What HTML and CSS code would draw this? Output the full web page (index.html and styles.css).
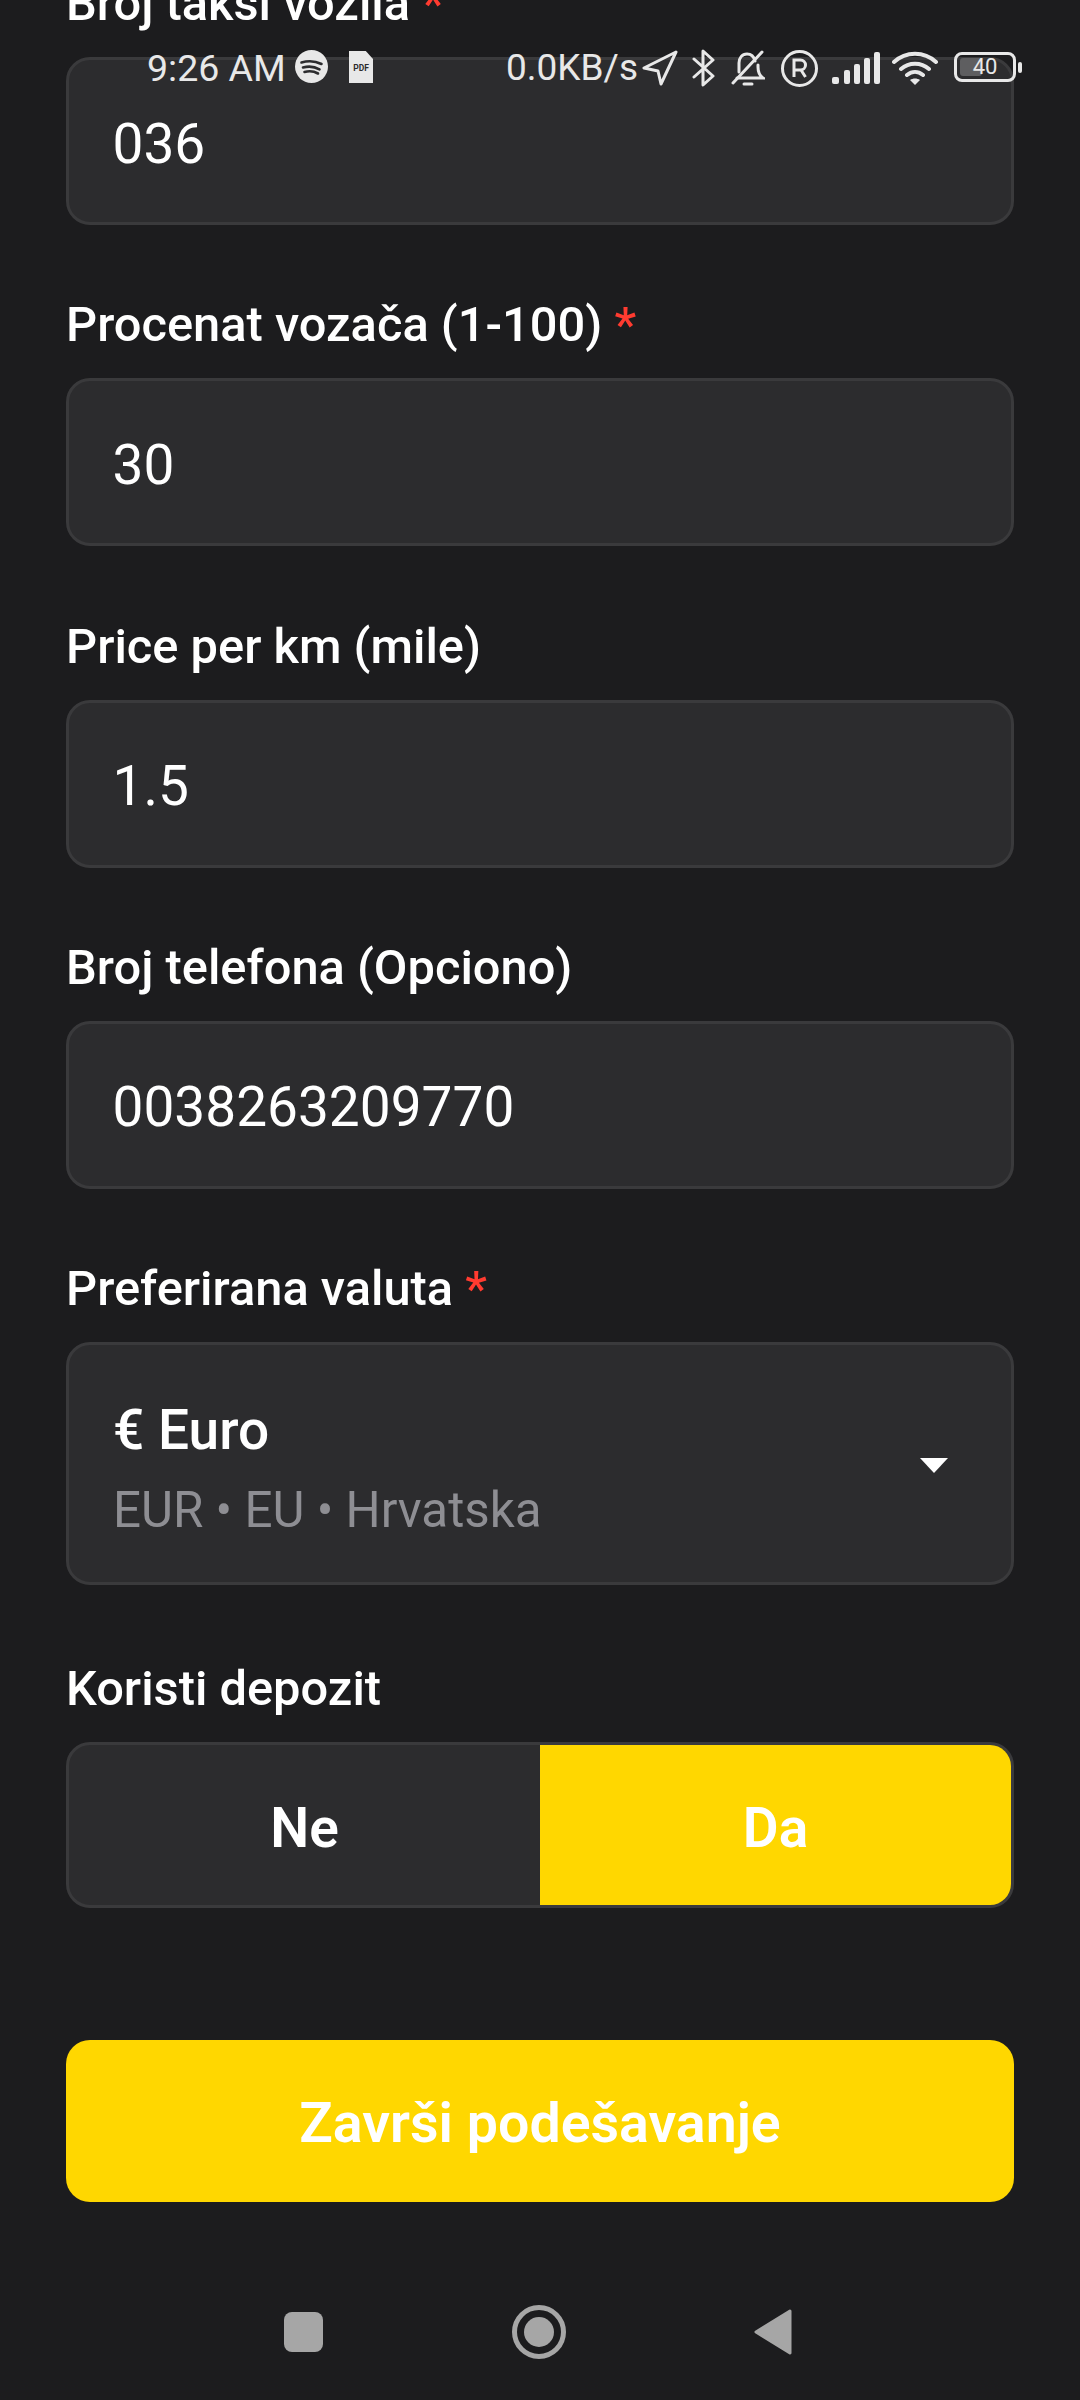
FILE: index.html
```html
<!DOCTYPE html>
<html>
<head>
	<title>Podešavanje</title>
	<link rel="stylesheet" href="styles.css">
</head>
<body>
	<div class="status">
		<span class="time">9:26 AM</span>
		<svg class="ic-spotify" width="33" height="33" viewBox="0 0 33 33">
			<circle cx="16.500" cy="16.500" r="16.500" fill="#e8e8e8"/>
			<path d="M6.500 12.500c6.500-2 14-1.500 20 1.500M8 17.500c5.500-1.500 11.500-1 16.500 1.800M9.500 22c4.500-1.200 9.500-.8 13.500 1.500" fill="none" stroke="#2c2c2e" stroke-width="2.600" stroke-linecap="round"/>
		</svg>
		<span class="pdf">PDF</span>
		<span class="speed">0.0KB/s</span>
		<svg class="ic-nav" width="36" height="36" viewBox="0 0 36 36">
			<path d="M34 2 2 18l14 3 3 13z" fill="none" stroke="#e8e8e8" stroke-width="3" stroke-linejoin="round"/>
		</svg>
		<svg class="ic-bt" width="24" height="38" viewBox="0 0 24 38">
			<path d="M2 10 21 27 11 36V2l10 9L2 28" fill="none" stroke="#e8e8e8" stroke-width="3" stroke-linejoin="round" stroke-linecap="round"/>
		</svg>
		<svg class="ic-bell" width="34" height="37" viewBox="0 0 34 37">
			<path d="M24 11c-1-4-4-7-8-7-5 0-8 4-8 9v9M6 28h26c-3-2-5-5-5-11v-2M13 34h8" fill="none" stroke="#e8e8e8" stroke-width="3" stroke-linecap="round"/>
			<path d="M31 2 2 33" fill="none" stroke="#e8e8e8" stroke-width="3" stroke-linecap="round"/>
		</svg>
		<svg class="ic-reg" width="37" height="37" viewBox="0 0 37 37">
			<circle cx="18.500" cy="18.500" r="17" fill="none" stroke="#e8e8e8" stroke-width="3"/>
			<path d="M13 27V10h6.500a5 5 0 0 1 0 10H13m7 0 4.500 7" fill="none" stroke="#e8e8e8" stroke-width="3"/>
		</svg>
		<svg class="ic-signal" width="48" height="32" viewBox="0 0 48 32">
			<rect x="0" y="25" width="7" height="7" rx="2" fill="#e8e8e8"/>
			<rect x="12" y="18" width="6" height="14" rx="2" fill="#e8e8e8"/>
			<rect x="22" y="12" width="6" height="20" rx="2" fill="#e8e8e8"/>
			<rect x="32" y="6" width="6" height="26" rx="2" fill="#e8e8e8"/>
			<rect x="42" y="0" width="6" height="32" rx="2" fill="#e8e8e8"/>
		</svg>
		<svg class="ic-wifi" width="46" height="34" viewBox="0 0 46 34">
			<path d="M2 11c12-11 30-11 42 0M9 18c8-7 20-7 28 0M15 24c5-4 11-4 16 0" fill="none" stroke="#e8e8e8" stroke-width="4" stroke-linecap="round"/>
			<path d="M23 34l-5-5c3-2 7-2 10 0z" fill="#e8e8e8"/>
		</svg>
		<div class="battery">
			<div class="battery-body">
				<div class="battery-level"></div>
				<span class="battery-num">40</span>
			</div>
			<div class="battery-nub"></div>
		</div>
	</div>

	<div class="form">
		<div class="field">
			<div class="label">Broj taksi vozila <span class="req">*</span></div>
			<div class="input">036</div>
		</div>
		<div class="field">
			<div class="label">Procenat vozača (1-100) <span class="req">*</span></div>
			<div class="input">30</div>
		</div>
		<div class="field">
			<div class="label">Price per km (mile)</div>
			<div class="input">1.5</div>
		</div>
		<div class="field">
			<div class="label">Broj telefona (Opciono)</div>
			<div class="input">0038263209770</div>
		</div>
		<div class="field">
			<div class="label">Preferirana valuta <span class="req">*</span></div>
			<div class="select">
				<div>
					<div class="select-title">€ Euro</div>
					<div class="select-sub">EUR • EU • Hrvatska</div>
				</div>
				<div class="caret"></div>
			</div>
		</div>
		<div class="field">
			<div class="label">Koristi depozit</div>
			<div class="toggle">
				<div class="opt">Ne</div>
				<div class="opt on">Da</div>
			</div>
		</div>
		<div class="submit">Završi podešavanje</div>
	</div>

	<div class="navbar">
		<div class="nav-square"></div>
		<div class="nav-home"><div class="nav-dot"></div></div>
		<svg width="38" height="46" viewBox="0 0 38 46">
			<path d="M36 2 2 23l34 21z" fill="#a6a6a6" stroke="#a6a6a6" stroke-width="3" stroke-linejoin="round"/>
		</svg>
	</div>
</body>
</html>
```

FILE: styles.css
```css
*{
	margin: 0;
	padding: 0;
	box-sizing: border-box;
}
body{
	width: 1080px;
	height: 2400px;
	overflow: hidden;
	background: #1c1c1e;
	font-family: Roboto, "Noto Sans", sans-serif;
	color: white;
}
/* status bar lies over the scrolled form */
.status{
	position: absolute;
	top: 48px;
	left: 147px;
	display: flex;
	align-items: center;
	height: 40px;
	color: #e8e8e8;
}
.time{
	width: 148px;
	font-size: 37.5px;
	line-height: 40px;
	white-space: nowrap;
}
.ic-spotify{
	margin-top: -3px;
}
.pdf{
	width: 24px;
	height: 32px;
	margin-top: -2px;
	margin-left: 21px;
	background: #e8e8e8;
	clip-path: polygon(0 0, 70% 0, 100% 25%, 100% 100%, 0 100%);
	color: #2c2c2e;
	font-size: 8.5px;
	font-weight: 700;
	line-height: 34px;
	text-align: center;
}
.speed{
	width: 136px;
	margin-left: 133px;
	font-size: 37px;
	line-height: 40px;
	white-space: nowrap;
}
.ic-bt{margin-left: 14px;}
.ic-bell{margin-left: 15px;}
.ic-reg{margin-left: 16px;}
.ic-signal{margin-left: 14px;}
.ic-wifi{margin-left: 12px;}
.battery{
	display: flex;
	align-items: center;
	margin-left: 16px;
	margin-top: -2px;
}
.battery-body{
	position: relative;
	width: 62px;
	height: 30px;
	border: 3px solid #e8e8e8;
	border-radius: 8px;
	text-align: center;
	font-size: 22px;
	line-height: 24px;
}
.battery-level{
	position: absolute;
	top: 3px;
	left: 3px;
	bottom: 3px;
	width: 22px;
	background: #5e5e60;
	border-radius: 3px;
}
.battery-num{
	position: relative;
}
.battery-nub{
	width: 4px;
	height: 11px;
	margin-left: 2px;
	background: #e8e8e8;
	border-radius: 2px;
}

.form{
	display: flex;
	flex-direction: column;
	gap: 69.33px;
	margin-top: -27px;
	padding: 0 66px;
}
.label{
	height: 62px;
	margin-bottom: 22px;
	font-size: 48.8px;
	font-weight: 500;
	line-height: 62px;
	white-space: nowrap;
}
.req{
	color: #ff3b30;
}
.input{
	display: flex;
	align-items: center;
	height: 168px;
	padding: 5px 43.5px 0;
	background: #2c2c2e;
	border: 3px solid #3a3a3c;
	border-radius: 24px;
	font-size: 55px;
}
.select{
	display: flex;
	align-items: center;
	justify-content: space-between;
	height: 243px;
	margin-bottom: 3px;
	padding: 12px 63px 0 44px;
	background: #2c2c2e;
	border: 3px solid #3a3a3c;
	border-radius: 24px;
}
.select-title{
	font-size: 55px;
	font-weight: 500;
	line-height: 70px;
}
.select-sub{
	margin-top: 10px;
	color: #8e8e93;
	font-size: 49.3px;
	line-height: 70px;
}
.caret{
	width: 0;
	height: 0;
	margin-bottom: 8px;
	border-left: 14px solid transparent;
	border-right: 14px solid transparent;
	border-top: 15px solid white;
}
.toggle{
	display: flex;
	height: 166px;
	overflow: hidden;
	background: #2c2c2e;
	border: 3px solid #3a3a3c;
	border-radius: 24px;
}
.opt{
	flex: 1;
	display: flex;
	align-items: center;
	justify-content: center;
	padding-top: 6px;
	font-size: 55px;
	font-weight: 600;
}
.on{
	background: #ffd700;
}
.submit{
	display: flex;
	align-items: center;
	justify-content: center;
	height: 162px;
	margin-top: 63px;
	padding-top: 5px;
	background: #ffd700;
	border-radius: 24px;
	font-size: 55.5px;
	font-weight: 600;
}
.navbar{
	display: flex;
	align-items: center;
	justify-content: space-between;
	width: 508px;
	margin: 103px 0 0 284px;
}
.nav-square{
	width: 39px;
	height: 40px;
	background: #a6a6a6;
	border-radius: 8px;
}
.nav-home{
	display: flex;
	align-items: center;
	justify-content: center;
	width: 54px;
	height: 54px;
	border: 5px solid #a6a6a6;
	border-radius: 50%;
}
.nav-dot{
	width: 30px;
	height: 30px;
	background: #a6a6a6;
	border-radius: 50%;
}
```
